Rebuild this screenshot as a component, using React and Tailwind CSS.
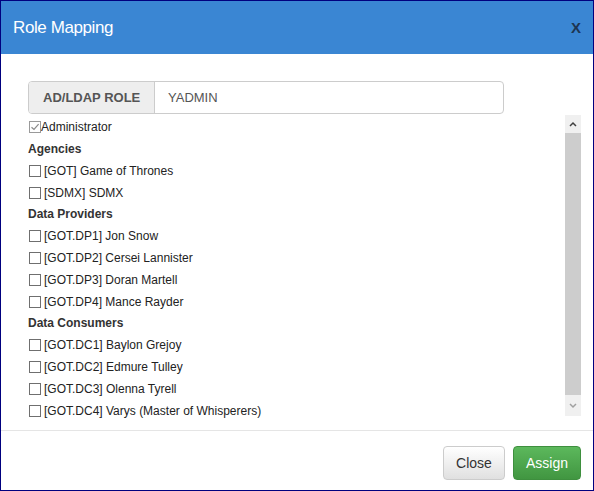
import React from "react";

const groups = [
  {
    title: "Agencies",
    items: ["[GOT] Game of Thrones", "[SDMX] SDMX"],
  },
  {
    title: "Data Providers",
    items: [
      "[GOT.DP1] Jon Snow",
      "[GOT.DP2] Cersei Lannister",
      "[GOT.DP3] Doran Martell",
      "[GOT.DP4] Mance Rayder",
    ],
  },
  {
    title: "Data Consumers",
    items: [
      "[GOT.DC1] Baylon Grejoy",
      "[GOT.DC2] Edmure Tulley",
      "[GOT.DC3] Olenna Tyrell",
      "[GOT.DC4] Varys (Master of Whisperers)",
    ],
  },
];

function Box({ checked }) {
  if (checked) {
    return (
      <span className="w-[12px] h-[12px] border border-[#9a9a9a] bg-white flex items-center justify-center shrink-0">
        <svg width="10" height="10" viewBox="0 0 10 10">
          <path d="M1.5 5.2 L4 7.5 L8.6 2.2" fill="none" stroke="#8a8a8a" strokeWidth="1.2" />
        </svg>
      </span>
    );
  }
  return <span className="w-[12px] h-[12px] border border-[#6f6f6f] bg-white shrink-0" />;
}

export default function App() {
  return (
    <div className="w-[594px] h-[491px] border border-[#00007f] bg-white flex flex-col font-['Liberation_Sans',Arial,sans-serif] text-[#222]">
      {/* header */}
      <div className="h-[53px] bg-[#3a86d3] flex items-center justify-between pl-[12px] pr-[12px]">
        <span className="text-white text-[17px] tracking-[-0.4px] leading-none">Role Mapping</span>
        <span className="text-[#1d3552] text-[15px] font-bold leading-none">X</span>
      </div>

      {/* body */}
      <div className="h-[376px] pt-[27px] pl-[27px] pr-[12px]">
        <div className="flex w-[476px] h-[33px] border border-[#cccccc] rounded-[4px] overflow-hidden text-[13px]">
          <div className="w-[126px] bg-[#eeeeee] border-r border-[#cccccc] flex items-center pl-[14px] font-bold text-[#555]">
            AD/LDAP ROLE
          </div>
          <div className="flex-1 flex items-center pl-[13px] text-[#555]">YADMIN</div>
        </div>

        <div className="flex h-[301px] mt-[1px]">
          <div className="flex-1 pt-[1px] text-[12px]">
            <label className="h-[21.7px] flex items-center pl-[1px]">
              <Box checked />
              <span>Administrator</span>
            </label>
            {groups.map((g) => (
              <div key={g.title}>
                <div className="h-[21.8px] pt-[1px] flex items-center font-bold text-[#333]">{g.title}</div>
                {g.items.map((it) => (
                  <label key={it} className="h-[21.8px] pt-[1px] flex items-center gap-[3px] pl-[1px]">
                    <Box />
                    <span>{it}</span>
                  </label>
                ))}
              </div>
            ))}
          </div>

          {/* scrollbar */}
          <div className="w-[16px] flex flex-col">
            <div className="h-[18px] bg-[#f0f0f0] flex items-center justify-center">
              <svg width="8" height="6" viewBox="0 0 8 6">
                <path d="M1 5 L4 2 L7 5" fill="none" stroke="#404040" strokeWidth="1.5" />
              </svg>
            </div>
            <div className="flex-1 bg-[#cdcdcd]" />
            <div className="h-[21px] bg-[#f0f0f0] flex items-center justify-center">
              <svg width="8" height="6" viewBox="0 0 8 6">
                <path d="M1 1 L4 4 L7 1" fill="none" stroke="#a0a0a0" strokeWidth="1.5" />
              </svg>
            </div>
          </div>
        </div>
      </div>

      {/* footer */}
      <div className="flex-1 border-t border-[#e5e5e5] flex justify-end items-start gap-[8px] pt-[15px] pr-[12px]">
        <button className="w-[62px] h-[34px] rounded-[4px] border border-[#cccccc] bg-gradient-to-b from-white to-[#e0e0e0] text-[14px] text-[#333]">
          Close
        </button>
        <button className="w-[68px] h-[34px] rounded-[4px] border border-[#3e8f3e] bg-gradient-to-b from-[#5cb85c] to-[#419641] text-[14px] text-white">
          Assign
        </button>
      </div>
    </div>
  );
}
